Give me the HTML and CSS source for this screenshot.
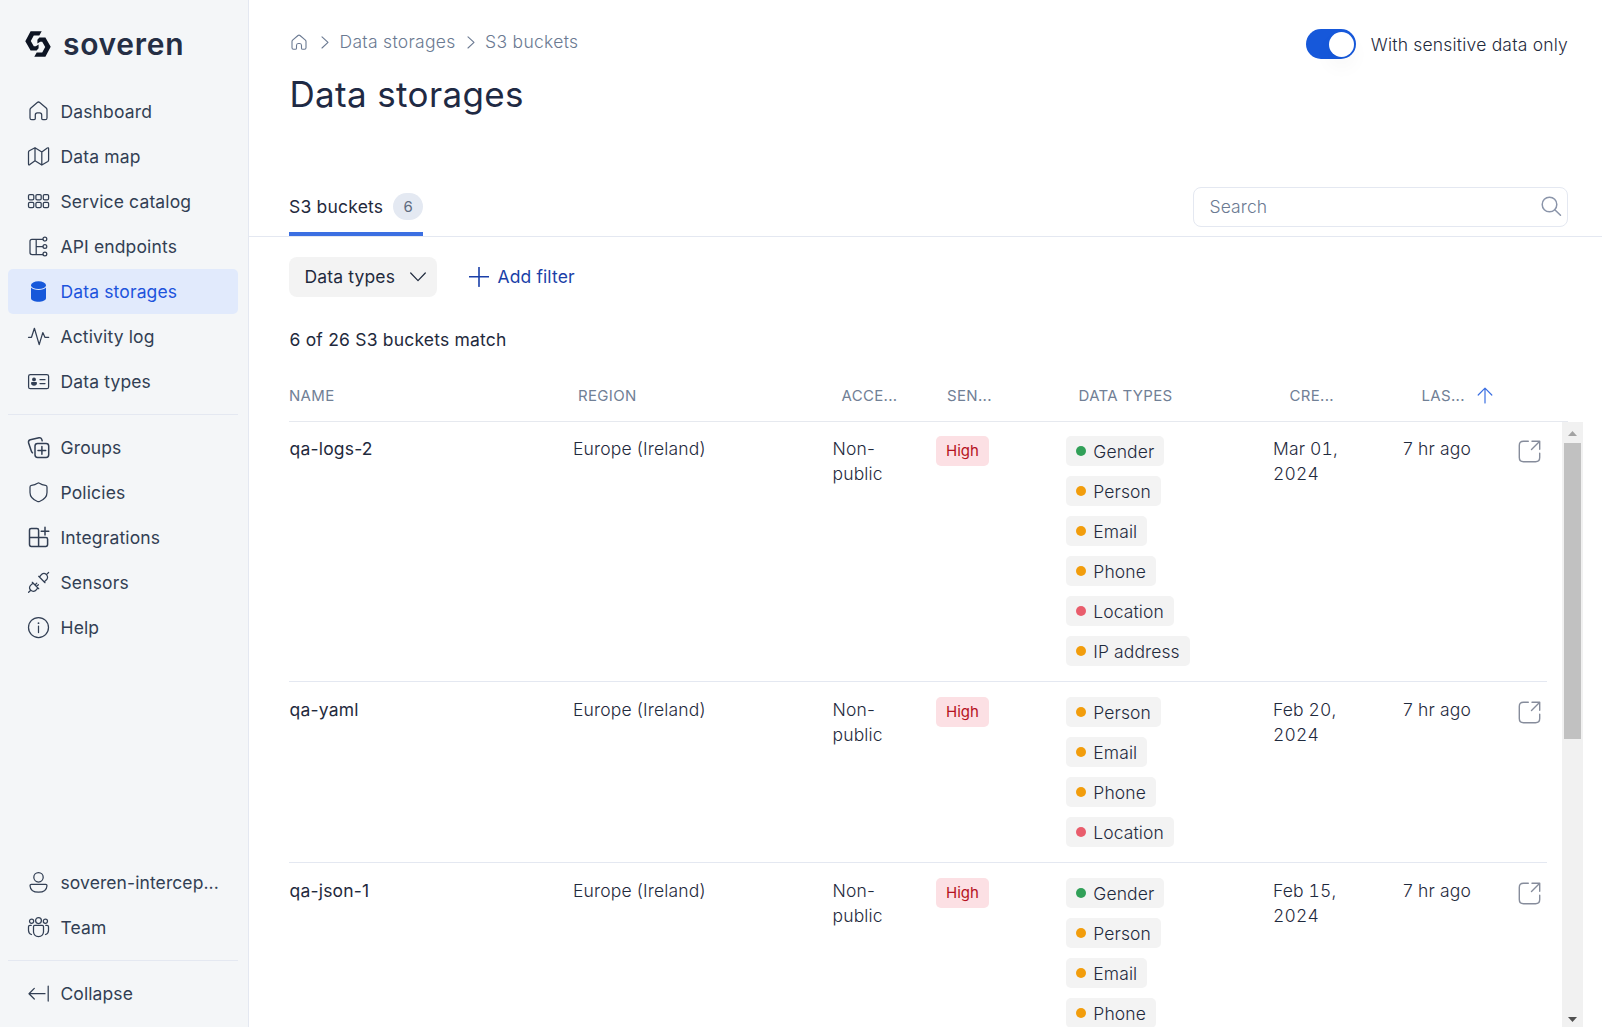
FILE: index.html
```
<!DOCTYPE html>
<html lang="en">
<head>
<meta charset="utf-8">
<title>Data storages</title>
<link rel="stylesheet" href="styles.css">
</head>
<body>
<aside class="sidebar">
  <div class="logo">
    <svg width="26" height="26" viewBox="0 0 26 26"><path d="M5.600.3H16.700L14.300 4.600H8.800L5.800 10L8.800 15.200H10.800L13.600 13.400V17.200L11.600 19.600H5.600L.3 10.200Z"/><path d="M20.400 25.700H9.300L11.700 21.400H17.200L20.200 16L17.200 10.800H15.200L12.400 12.600V8.800L14.400 6.400H20.400L25.700 15.800Z"/></svg>
    <span class="logo-text">soveren</span>
  </div>
  <nav class="nav">
    <a class="item"><svg class="ico" viewBox="0 0 23 23"><path d="M4.800 19.700H7.200Q8.300 19.700 8.300 18.600V15Q8.300 12.800 10.300 12.800H12.700Q14.700 12.800 14.700 15V18.600Q14.700 19.700 15.800 19.700H18.200Q20 19.700 20 17.900V9.800Q20 8.800 19.200 8L12.700 2.500Q11.500 1.500 10.300 2.500L3.900 8Q3 8.800 3 9.800V17.900Q3 19.700 4.800 19.700Z"/></svg>Dashboard</a>
    <a class="item"><svg class="ico" viewBox="0 0 23 23"><path d="M1.500 7.200Q1.500 6.300 2.300 5.800L8 2.700L14.800 7L20.300 3Q21.600 2.300 21.600 3.700V15Q21.600 16 20.800 16.500L14.800 20L8 15.700L2.800 19.600Q1.500 20.400 1.500 19ZM8 2.700V15.700M14.800 7V20"/></svg>Data map</a>
    <a class="item"><svg class="ico" viewBox="0 0 23 23"><rect x="1.500" y="4.500" width="5.300" height="5.300" rx="1.300"/><rect x="8.900" y="4.500" width="5.300" height="5.300" rx="1.300"/><rect x="16.300" y="4.500" width="5.300" height="5.300" rx="1.300"/><rect x="1.500" y="12.300" width="5.300" height="5.300" rx="1.300"/><rect x="8.900" y="12.300" width="5.300" height="5.300" rx="1.300"/><rect x="16.300" y="12.300" width="5.300" height="5.300" rx="1.300"/></svg>Service catalog</a>
    <a class="item"><svg class="ico" viewBox="0 0 23 23"><path d="M15.800 4.300H5Q3 4.300 3 6.300V17.500Q3 19.500 5 19.500H15.800M9.200 4.300V19.500M9.200 11.500H15.800"/><circle cx="17.900" cy="4.100" r="1.900"/><circle cx="17.900" cy="11.500" r="1.900"/><circle cx="17.900" cy="19" r="1.900"/></svg>API endpoints</a>
    <a class="item active"><svg class="ico solid" viewBox="0 0 23 23"><ellipse cx="11.500" cy="5.200" rx="7.500" ry="3.900"/><path d="M4 7.600C6 10.900 17 10.900 19 7.600V18C19 23 4 23 4 18Z"/></svg>Data storages</a>
    <a class="item"><svg class="ico" viewBox="0 0 23 23"><path d="M1.500 12.300H4.500L7.400 3.300L12.200 19.600L15.800 7.600L17.900 12.300H21.700"/></svg>Activity log</a>
    <a class="item"><svg class="ico" viewBox="0 0 23 23"><rect x="1.600" y="4.500" width="20" height="14.200" rx="1.800"/><path d="M13 9.700H18M13 13.500H18"/><circle cx="7" cy="9.400" r="1.900" fill="currentColor" stroke="none"/><path d="M4 13Q4 11.900 5 11.900H9Q10 11.900 10 13Q9.800 15.800 7 15.800T4 13Z" fill="currentColor" stroke="none"/></svg>Data types</a>
    <hr class="rule">
    <a class="item"><svg class="ico bold" viewBox="0 0 23 23"><rect x="8" y="7.400" width="13.700" height="14" rx="2.600"/><path d="M14.900 10.500V18.200M11 14.400H18.700M5.500 16.800Q4.700 16.300 4.300 15L1.600 7Q1 4.500 3.300 3.800L12 1.700Q14.500 1.200 15.200 4.800"/></svg>Groups</a>
    <a class="item"><svg class="ico" viewBox="0 0 23 23"><path d="M10.500 2.300Q11.500 1.500 12.500 2.300Q14.800 4 18.500 4.300Q20 4.400 20 6V11.500Q20 17.500 12.500 20.500Q11.500 20.900 10.500 20.500Q3 17.500 3 11.500V6Q3 4.400 4.500 4.300Q8.200 4 10.500 2.300Z"/></svg>Policies</a>
    <a class="item"><svg class="ico bold" viewBox="0 0 23 23"><path d="M11.600 11.500V4.300Q11.600 2.600 9.900 2.600H4.300Q2.500 2.600 2.500 4.300V18.600Q2.500 20.400 4.300 20.400H18.700Q20.600 20.400 20.600 18.600V13.200Q20.600 11.500 18.900 11.500ZM2.500 11.500H11.600V20.400M18 1.200V9M14.200 5.200H21.800"/></svg>Integrations</a>
    <a class="item"><svg class="ico" viewBox="0 0 23 23"><path d="M1.600 21.300L3.800 19.200M5.300 11.300L11.700 17.700M6.300 12.300L4.300 13.600C1.500 16 2.500 18 3.800 19.200C5 20.500 7.500 21.300 9.500 18.700L10.700 16.700M8 14L9.800 12.100M9.500 15.500L11.400 13.700M21.600 1.500L19.400 3.600M11.700 5.300L18 11.700M12.500 6.100L13.700 4.300C16 1.500 18 2.300 19.400 3.600C20.700 5 21.500 7 18.700 9.500L17.200 10.900"/></svg>Sensors</a>
    <a class="item"><svg class="ico" viewBox="0 0 23 23"><circle cx="11.500" cy="11.500" r="10"/><path d="M11.500 10V16.500"/><circle cx="11.500" cy="7.200" r=".9" fill="currentColor" stroke="none"/></svg>Help</a>
  </nav>
  <nav class="nav bottom">
    <a class="item"><svg class="ico" viewBox="0 0 23 23"><circle cx="11.500" cy="6.300" r="4.700"/><path d="M4.300 13.300H18.700Q20 13.300 20 14.700Q19.500 21.200 11.500 21.200T3 14.700Q3 13.300 4.300 13.300Z"/></svg>soveren-intercep...</a>
    <a class="item"><svg class="ico" viewBox="0 0 23 23"><circle cx="4.600" cy="5.200" r="2.100"/><circle cx="11.500" cy="4.600" r="2.900"/><circle cx="18.400" cy="5.200" r="2.100"/><path d="M6.500 10.500Q6.500 9.300 7.700 9.300H15.300Q16.500 9.300 16.500 10.500V16Q16 20.600 11.500 20.600T6.500 16ZM4.300 9.300H3Q1.500 9.300 1.500 10.800V14.500Q1.700 17.800 4.500 18.500M18.700 9.300H20Q21.500 9.300 21.500 10.800V14.500Q21.300 17.800 18.500 18.500"/></svg>Team</a>
    <hr class="rule">
    <a class="item"><svg class="ico" viewBox="0 0 23 23"><path d="M18 11.700H2M7.300 6.400L2 11.700L7.300 17M21.200 4V19"/></svg>Collapse</a>
  </nav>
</aside>
<main class="main">
  <header class="top">
    <div>
      <div class="crumbs">
        <svg width="16" height="17" viewBox="0 0 16 17"><path d="M2.500 15.300H4.200Q5.500 15.300 5.500 14.200V11.500Q5.500 9.500 7.200 9.500H8.800Q10.500 9.500 10.500 11.500V14.200Q10.500 15.300 11.800 15.300H13.500Q15 15.300 15 13.800V7.500Q15 6.800 14.400 6.200L9 1.500Q8 .8 7 1.500L1.600 6.200Q1 6.800 1 7.500V13.800Q1 15.300 2.500 15.300Z"/></svg>
        <svg class="sep first" width="8" height="13" viewBox="0 0 8 13"><path d="M1 .8L7 6.400L1 12"/></svg>
        <span>Data storages</span>
        <svg class="sep" width="8" height="13" viewBox="0 0 8 13"><path d="M1 .8L7 6.400L1 12"/></svg>
        <span>S3 buckets</span>
      </div>
      <h1 class="title">Data storages</h1>
    </div>
    <label class="switch"><span class="track"><span class="knob"></span></span>With sensitive data only</label>
  </header>
  <section class="tabs">
    <div class="tab">S3 buckets<span class="count">6</span></div>
    <div class="search"><span>Search</span><svg width="22" height="22" viewBox="0 0 22 22"><circle cx="8.500" cy="8.500" r="7.300"/><path d="M13.800 13.800L19.500 19.300"/></svg></div>
  </section>
  <section class="filters">
    <button class="drop"><span>Data types</span><svg width="16" height="10" viewBox="0 0 16 10"><path d="M.7 1L8 8.700L15.300 1"/></svg></button>
    <a class="add"><svg width="20" height="20" viewBox="0 0 20 20"><path d="M10 .3V19.300M.3 9.800H19.700"/></svg>Add filter</a>
  </section>
  <p class="match">6 of 26 S3 buckets match</p>
  <section class="table">
    <div class="thead">
      <span>NAME</span><span>REGION</span><span>ACCE...</span><span>SEN...</span><span>DATA TYPES</span><span>CRE...</span><span>LAS...</span>
      <svg width="16" height="17" viewBox="0 0 16 17"><path d="M8 16V1.200M1.200 8L8 1.200L14.800 8"/></svg>
    </div>
    <div class="scroller">
      <div class="rows">
        <div class="row">
          <span class="name">qa-logs-2</span><span>Europe (Ireland)</span><span>Non-<br>public</span><span><b class="high">High</b></span>
          <div class="chips"><span class="chip green">Gender</span><span class="chip">Person</span><span class="chip">Email</span><span class="chip">Phone</span><span class="chip red">Location</span><span class="chip">IP address</span></div>
          <span class="date">Mar 01,<br>2024</span><span>7 hr ago</span>
          <svg class="open" viewBox="0 0 24 24"><path d="M10.300 1.300H5.500Q1.300 1.300 1.300 5.500V17.500Q1.300 21.700 5.500 21.700H17.500Q21.700 21.700 21.700 17.500V13.300M14 1.300H21.700V9.300M21.500 1.500L13.500 9.500"/></svg>
        </div>
        <div class="row">
          <span class="name">qa-yaml</span><span>Europe (Ireland)</span><span>Non-<br>public</span><span><b class="high">High</b></span>
          <div class="chips"><span class="chip">Person</span><span class="chip">Email</span><span class="chip">Phone</span><span class="chip red">Location</span></div>
          <span class="date">Feb 20,<br>2024</span><span>7 hr ago</span>
          <svg class="open" viewBox="0 0 24 24"><path d="M10.300 1.300H5.500Q1.300 1.300 1.300 5.500V17.500Q1.300 21.700 5.500 21.700H17.500Q21.700 21.700 21.700 17.500V13.300M14 1.300H21.700V9.300M21.500 1.500L13.500 9.500"/></svg>
        </div>
        <div class="row">
          <span class="name">qa-json-1</span><span>Europe (Ireland)</span><span>Non-<br>public</span><span><b class="high">High</b></span>
          <div class="chips"><span class="chip green">Gender</span><span class="chip">Person</span><span class="chip">Email</span><span class="chip">Phone</span></div>
          <span class="date">Feb 15,<br>2024</span><span>7 hr ago</span>
          <svg class="open" viewBox="0 0 24 24"><path d="M10.300 1.300H5.500Q1.300 1.300 1.300 5.500V17.500Q1.300 21.700 5.500 21.700H17.500Q21.700 21.700 21.700 17.500V13.300M14 1.300H21.700V9.300M21.500 1.500L13.500 9.500"/></svg>
        </div>
      </div>
      <div class="bar">
        <svg class="arrow up" width="9" height="5" viewBox="0 0 9 5"><path d="M0 5L4.500 0L9 5Z"/></svg>
        <span class="thumb"></span>
        <svg class="arrow down" width="9" height="5" viewBox="0 0 9 5"><path d="M0 0H9L4.500 5Z"/></svg>
      </div>
    </div>
  </section>
</main>
</body>
</html>
```
FILE: styles.css
```
* { box-sizing: border-box; }
body {
  margin: 0;
  height: 1027px;
  display: flex;
  overflow: hidden;
  background: #fff;
  color: #1f2a3d;
  font: 400 17.5px/25px Inter, "Liberation Sans", sans-serif;
}
svg { flex: none; fill: none; stroke: currentColor; stroke-linecap: round; stroke-linejoin: round; }

.sidebar {
  flex: none;
  width: 249px;
  height: 1027px;
  padding: 31px 10px 11px 8px;
  display: flex;
  flex-direction: column;
  background: #f4f6f8;
  border-right: 1px solid #e4e8f1;
}
.logo { display: flex; height: 26px; margin: 0 0 32px 17px; gap: 12px; align-items: center; }
.logo svg { fill: #0d1423; stroke: none; }
.logo-text { font-size: 30px; line-height: 26px; font-weight: 600; letter-spacing: .7px; color: #252e44; }
.nav { display: flex; flex-direction: column; }
.bottom { margin-top: auto; }
.item {
  height: 45px;
  padding-left: 19px;
  display: flex;
  align-items: center;
  gap: 10.500px;
  border-radius: 5px;
  color: #323f54;
  letter-spacing: .14px;
  white-space: nowrap;
}
.bottom .item { letter-spacing: .09px; }
.item.active { background: #e1eafc; color: #1d54dc; }
.ico { width: 23px; height: 23px; stroke-width: 1.250; }
.ico.bold { stroke-width: 1.500; }
.ico.solid { fill: #1658da; stroke: none; }
.rule { width: 230px; height: 1px; margin: 10px 0; border: 0; background: #e4e8f1; }

.main { flex: 1; min-width: 0; display: flex; flex-direction: column; }
.top { height: 187px; padding: 29px 34px 0 40px; display: flex; justify-content: space-between; align-items: flex-start; }
.crumbs { display: flex; align-items: center; height: 26px; padding-left: 2px; color: #6b7a92; font-weight: 300; letter-spacing: .3px; }
.crumbs span { margin-bottom: 2px; }
.crumbs svg { stroke-width: 1.100; }
.sep { margin: 0 10.500px 0 11px; }
.sep.first { margin: 0 10.500px 0 14px; }
.title { margin: 17px 0 0 .5px; font-size: 35px; line-height: 44px; font-weight: 400; color: #1f2a44; letter-spacing: .35px; }
.switch { display: flex; align-items: center; gap: 15px; height: 30px; font-weight: 300; letter-spacing: .2px; }
.track { width: 50px; height: 30px; padding: 3px 2px; display: flex; justify-content: flex-end; border-radius: 15px; background: #1658da; }
.knob { width: 25px; height: 25px; border-radius: 50%; background: #fff; box-shadow: 0 10px 20px rgba(39, 39, 39, .04); }

.tabs { height: 50px; padding: 0 34px 0 40px; display: flex; justify-content: space-between; align-items: flex-start; border-bottom: 1px solid #e4e8f1; }
.tab { height: 49px; padding-bottom: 6px; display: flex; align-items: center; gap: 10px; border-bottom: 4px solid #3b6fe2; border-radius: 2px 2px 0 0; letter-spacing: .2px; }
.count { width: 30px; height: 27px; border-radius: 14px; background: #e4e9f2; color: #5f6b80; font-size: 15px; line-height: 27px; letter-spacing: 0; text-align: center; }
.search { width: 375px; height: 40px; padding: 0 4px 0 15.500px; display: flex; align-items: center; justify-content: space-between; border: 1px solid #e4e8f1; border-radius: 8px; color: #6b7a92; font-weight: 300; letter-spacing: .1px; }
.search span { margin-bottom: 2px; }
.search svg { color: #8a94a9; stroke-width: 1.500; }

.filters { height: 80px; padding: 0 40px; display: flex; align-items: center; }
.drop { width: 148px; height: 40px; padding: 0 11.500px 0 15.500px; display: flex; align-items: center; justify-content: space-between; border: 0; border-radius: 8px; background: #f3f3f3; color: inherit; font: inherit; letter-spacing: .15px; }
.drop span { margin-bottom: 2px; }
.drop svg { stroke-width: 1.200; }
.add { margin: 0 0 1px 32px; display: flex; align-items: center; gap: 8.500px; color: #1a3fa8; letter-spacing: .12px; }
.add svg { stroke-width: 1.600; }
.match { margin: 10px 40px 0 40.500px; letter-spacing: .2px; }

.table { flex: 1; min-height: 0; display: flex; flex-direction: column; margin: 17px 19px 0 40px; }
.thead {
  height: 53px;
  width: 1279px;
  display: grid;
  grid-template-columns: 289px 263.500px 105.500px 131.500px 211px 132px 55px 16px;
  align-items: center;
  border-bottom: 1px solid #e6e9ef;
  color: #718096;
  font-size: 15px;
  letter-spacing: .32px;
  white-space: nowrap;
}
.thead svg { color: #3b6fe2; stroke-width: 1.200; }
.scroller { flex: 1; min-height: 0; display: flex; justify-content: space-between; overflow: hidden; }
.rows { width: 1258px; }
.row {
  padding: 15px 0;
  display: grid;
  grid-template-columns: 284px 259.500px 103.500px 130px 207px 130px 114.500px 24px;
  align-items: start;
  border-bottom: 1px solid #e4e8f1;
  font-weight: 300;
  letter-spacing: .16px;
}
.row:first-child { padding-top: 14px; }
.name { padding-left: .5px; font-weight: 400; letter-spacing: .2px; }
.date { font-variant-numeric: tabular-nums; }
.high { display: inline-block; height: 30px; padding: 0 10px; border-radius: 5px; background: #fce0e4; color: #b51220; font-size: 15px; font-weight: 400; line-height: 30px; letter-spacing: 0; }
.chips { display: flex; flex-direction: column; align-items: flex-start; gap: 10px; }
.chip { height: 30px; padding: 0 10px; display: flex; align-items: center; gap: 7.300px; border-radius: 5px; background: #f3f3f3; letter-spacing: .1px; }
.chip::before { content: ""; width: 10px; height: 10px; border-radius: 50%; background: #f29d0c; }
.chip.green::before { background: #31a058; }
.chip.red::before { background: #e95d6c; }
.open { width: 24px; height: 24px; margin-top: 3.500px; color: #868c9b; stroke-width: 1.400; }
.bar { width: 21px; display: flex; flex-direction: column; align-items: center; background: #f1f1f1; }
.arrow { stroke: none; }
.up { margin: 9px 0 7px; fill: #a3a3a3; }
.thumb { width: 17px; height: 296px; background: #c1c1c1; }
.down { margin: auto 0 5px; fill: #505050; }
```
